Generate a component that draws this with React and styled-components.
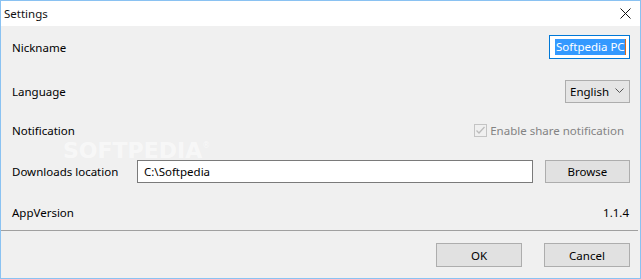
import React from "react";
import styled, { createGlobalStyle } from "styled-components";

const Global = createGlobalStyle`
  html, body {
    margin: 0;
    padding: 0;
    background: #f0f0f0;
  }
  body {
    font-family: "Segoe UI", "Noto Sans", "Liberation Sans", sans-serif;
    font-size: 11.5px;
    color: #000;
  }
`;

const Window = styled.div`
  position: relative;
  box-sizing: border-box;
  width: 641px;
  height: 279px;
  border: 1px solid #8ac2f2;
  background: #f0f0f0;
  display: flex;
  flex-direction: column;
  overflow: hidden;
`;

const TitleBar = styled.div`
  height: 25px;
  flex: none;
  background: #fff;
  display: flex;
  align-items: center;
  justify-content: space-between;
  padding: 0 9px 0 3px;
  font-size: 11.5px;
  color: #111;
`;

const CloseIcon = styled.svg`
  width: 11px;
  height: 11px;
  display: block;
`;

const Form = styled.div`
  position: relative;
  flex: none;
  padding: 9px 10px 0 10px;
  display: flex;
  flex-direction: column;
`;

const Row = styled.div`
  height: 24px;
  margin-top: ${(p) => p.$top || 0}px;
  display: flex;
  align-items: center;
  gap: 6px;
`;

const Label = styled.div`
  flex: none;
  width: ${(p) => (p.$w ? p.$w + "px" : "auto")};
  padding-left: 1px;
  white-space: nowrap;
`;

const Spacer = styled.div`
  flex: 1;
`;

const NickBox = styled.div`
  box-sizing: border-box;
  width: 81px;
  height: 24px;
  border: 1px solid #0078d7;
  background: #fff;
  display: flex;
  align-items: center;
  padding-left: 5px;
`;

const Selected = styled.span`
  background: #3399ff;
  color: #fff;
  line-height: 16px;
  padding: 0 0 0 1px;
  border-right: 1px solid #d86a1a;
  white-space: nowrap;
`;

const Combo = styled.div`
  box-sizing: border-box;
  width: 65px;
  height: 23px;
  background: #e5e5e5;
  border: 1px solid #adadad;
  display: flex;
  align-items: center;
  justify-content: space-between;
  padding: 0 5px 0 4px;
`;

const Chevron = styled.svg`
  width: 9px;
  height: 6px;
  display: block;
`;

const CheckWrap = styled.label`
  display: flex;
  align-items: center;
  gap: 3px;
  color: #838383;
  margin-right: 6px;
`;

const CheckBox = styled.span`
  box-sizing: border-box;
  width: 13px;
  height: 13px;
  border: 1px solid #c4c4c4;
  background: #f0f0f0;
  display: flex;
  align-items: center;
  justify-content: center;
`;

const PathInput = styled.div`
  box-sizing: border-box;
  width: 400px;
  height: 23px;
  margin-left: 13px;
  border: 1px solid #7a7a7a;
  background: #fff;
  display: flex;
  align-items: center;
  padding-left: 6px;
`;

const Button = styled.div`
  box-sizing: border-box;
  width: 86px;
  height: ${(p) => p.$h || 23}px;
  background: #e1e1e1;
  border: 1px solid #adadad;
  display: flex;
  align-items: center;
  justify-content: center;
`;

const Version = styled.div`
  margin-right: 1px;
`;

const Separator = styled.div`
  height: 1px;
  flex: none;
  background: #a0a0a0;
  margin-top: 6px;
  margin-right: 2px;
`;

const Footer = styled.div`
  display: flex;
  justify-content: flex-end;
  gap: 22px;
  padding: 12px 10px 0 0;
`;

const Watermark = styled.div`
  position: absolute;
  left: 62px;
  top: 116px;
  font-family: "DejaVu Sans", sans-serif;
  font-weight: bold;
  font-size: 22px;
  line-height: 18px;
  color: rgba(255, 255, 255, 0.55);
  pointer-events: none;
  sup {
    font-size: 8px;
    line-height: 8px;
    font-weight: normal;
    vertical-align: top;
  }
`;

export default function App() {
  return (
    <>
      <Global />
      <Window>
        <TitleBar>
          <span>Settings</span>
          <CloseIcon viewBox="0 0 11 11">
            <path d="M0.5 0.5 L10.5 10.5 M10.5 0.5 L0.5 10.5" stroke="#111" strokeWidth="1" />
          </CloseIcon>
        </TitleBar>
        <Form>
          <Watermark>
            SOFTPEDIA<sup>®</sup>
          </Watermark>
          <Row>
            <Label>Nickname</Label>
            <Spacer />
            <NickBox>
              <Selected>Softpedia PC</Selected>
            </NickBox>
          </Row>
          <Row $top={20}>
            <Label>Language</Label>
            <Spacer />
            <Combo>
              <span>English</span>
              <Chevron viewBox="0 0 9 6">
                <polyline points="0.5,0.5 4.5,4.5 8.5,0.5" fill="none" stroke="#555" strokeWidth="1" />
              </Chevron>
            </Combo>
          </Row>
          <Row $top={15}>
            <Label>Notification</Label>
            <Spacer />
            <CheckWrap>
              <CheckBox>
                <svg width="11" height="11" viewBox="0 0 11 11">
                  <polyline points="1.5,5.5 4,8 9.5,2" fill="none" stroke="#bcbcbc" strokeWidth="1.3" />
                </svg>
              </CheckBox>
              Enable share notification
            </CheckWrap>
          </Row>
          <Row $top={17}>
            <Label $w={106}>Downloads location</Label>
            <PathInput>C:\Softpedia</PathInput>
            <Spacer />
            <Button>Browse</Button>
          </Row>
          <Row $top={17}>
            <Label>AppVersion</Label>
            <Spacer />
            <Version>1.1.4</Version>
          </Row>
        </Form>
        <Separator />
        <Footer>
          <Button $h={24}>OK</Button>
          <Button $h={24}>Cancel</Button>
        </Footer>
      </Window>
    </>
  );
}
